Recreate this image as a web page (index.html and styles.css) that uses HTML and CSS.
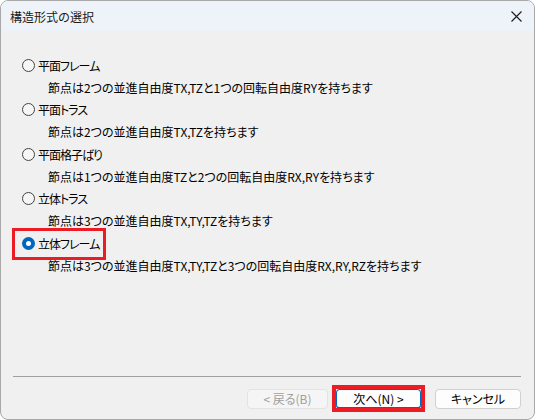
FILE: index.html
```html
<!DOCTYPE html>
<html lang="ja">
<head>
  <meta charset="UTF-8">
  <title>構造形式の選択</title>
  <link rel="stylesheet" href="styles.css">
</head>
<body>

<div class="dialog">
  <div class="titlebar">
    <span class="title">構造形式の選択</span>
    <svg class="close" width="11" height="11" viewBox="0 0 11 11">
      <path d="M0.5 0.5 L10.5 10.5 M10.5 0.5 L0.5 10.5" stroke="#1a1a1a" stroke-width="1.1" fill="none"/>
    </svg>
  </div>

  <div class="content">
    <div class="option">
      <span class="choice"><span class="radio"></span><span class="label">平面フレーム</span></span>
    </div>
    <div class="desc">節点は2つの並進自由度TX,TZと1つの回転自由度RYを持ちます</div>

    <div class="option">
      <span class="choice"><span class="radio"></span><span class="label">平面トラス</span></span>
    </div>
    <div class="desc">節点は2つの並進自由度TX,TZを持ちます</div>

    <div class="option">
      <span class="choice"><span class="radio"></span><span class="label">平面格子ばり</span></span>
    </div>
    <div class="desc">節点は1つの並進自由度TZと2つの回転自由度RX,RYを持ちます</div>

    <div class="option">
      <span class="choice"><span class="radio"></span><span class="label">立体トラス</span></span>
    </div>
    <div class="desc">節点は3つの並進自由度TX,TY,TZを持ちます</div>

    <div class="option">
      <span class="choice mark"><span class="radio checked"></span><span class="label">立体フレーム</span></span>
    </div>
    <div class="desc">節点は3つの並進自由度TX,TY,TZと3つの回転自由度RX,RY,RZを持ちます</div>
  </div>

  <div class="footer">
    <div class="separator"></div>
    <div class="buttons">
      <button class="btn back" disabled>&lt; 戻る(B)</button>
      <button class="btn next mark-btn">次へ(N) &gt;</button>
      <button class="btn cancel">キャンセル</button>
    </div>
  </div>
</div>

</body>
</html>
```

FILE: styles.css
```css
body {
  margin: 0;
  background: #ffffff;
  font-family: "Noto Sans CJK JP", "Noto Sans", sans-serif;
  font-size: 12px;
  color: #000;
}

.dialog {
  box-sizing: border-box;
  width: 535px;
  height: 420px;
  border: 1px solid #a8a8a8;
  border-radius: 8px;
  background: #f0f0f0;
  display: flex;
  flex-direction: column;
  overflow: hidden;
}

.titlebar {
  height: 30px;
  background: #eef3f9;
  display: flex;
  align-items: center;
  justify-content: space-between;
  padding: 0 12px 0 9px;
}

.title {
  font-size: 12px;
  color: #1a1a1a;
}

.content {
  flex: 1;
  padding-top: 23px;
}

.option {
  height: 22px;
  display: flex;
  align-items: center;
  padding-left: 21px;
}

.choice {
  display: inline-flex;
  align-items: center;
  gap: 3px;
  font-feature-settings: "palt";
  position: relative;
}

.label {
  letter-spacing: -1px;
}

.radio {
  box-sizing: border-box;
  width: 13px;
  height: 13px;
  border: 1px solid #444;
  border-radius: 50%;
  background: #f6f6f6;
}

.radio.checked {
  border: none;
  background: #0067c0;
  display: flex;
  align-items: center;
  justify-content: center;
}

.radio.checked::before {
  content: "";
  width: 5px;
  height: 5px;
  border-radius: 50%;
  background: #fff;
}

.desc {
  height: 22.5px;
  display: flex;
  align-items: center;
  padding-left: 47px;
  font-feature-settings: "palt";
}

/* red highlight boxes */
.mark::after {
  content: "";
  position: absolute;
  left: -10px;
  right: -7px;
  top: -7px;
  bottom: -8px;
  border: 3px solid #ed1c24;
}

.mark-btn {
  position: relative;
}

.mark-btn::after {
  content: "";
  position: absolute;
  left: -5px;
  right: -5px;
  top: -5px;
  bottom: -5px;
  border: 4px solid #ed1c24;
}

.footer {
  padding: 0 13px 10px 12px;
}

.separator {
  height: 1px;
  background: #a0a0a0;
}

.buttons {
  display: flex;
  justify-content: flex-end;
  margin-top: 12px;
}

.btn {
  box-sizing: border-box;
  height: 20px;
  font-family: "Noto Sans CJK JP", "Noto Sans", sans-serif;
  font-size: 12px;
  border: 1px solid #d0d0d0;
  border-radius: 4px;
  background: #fdfdfd;
  color: #000;
  padding: 0;
  line-height: 18px;
  font-feature-settings: "palt";
}

.back {
  width: 81px;
  color: #a0a0a0;
  background: #f5f5f5;
  border-color: #e3e3e3;
}

.next {
  width: 85px;
  margin-left: 8px;
  border: 1px solid #0067c0;
  border-bottom-width: 2px;
  background: #fdfdfd;
}

.cancel {
  width: 86px;
  margin-left: 14px;
}
```
